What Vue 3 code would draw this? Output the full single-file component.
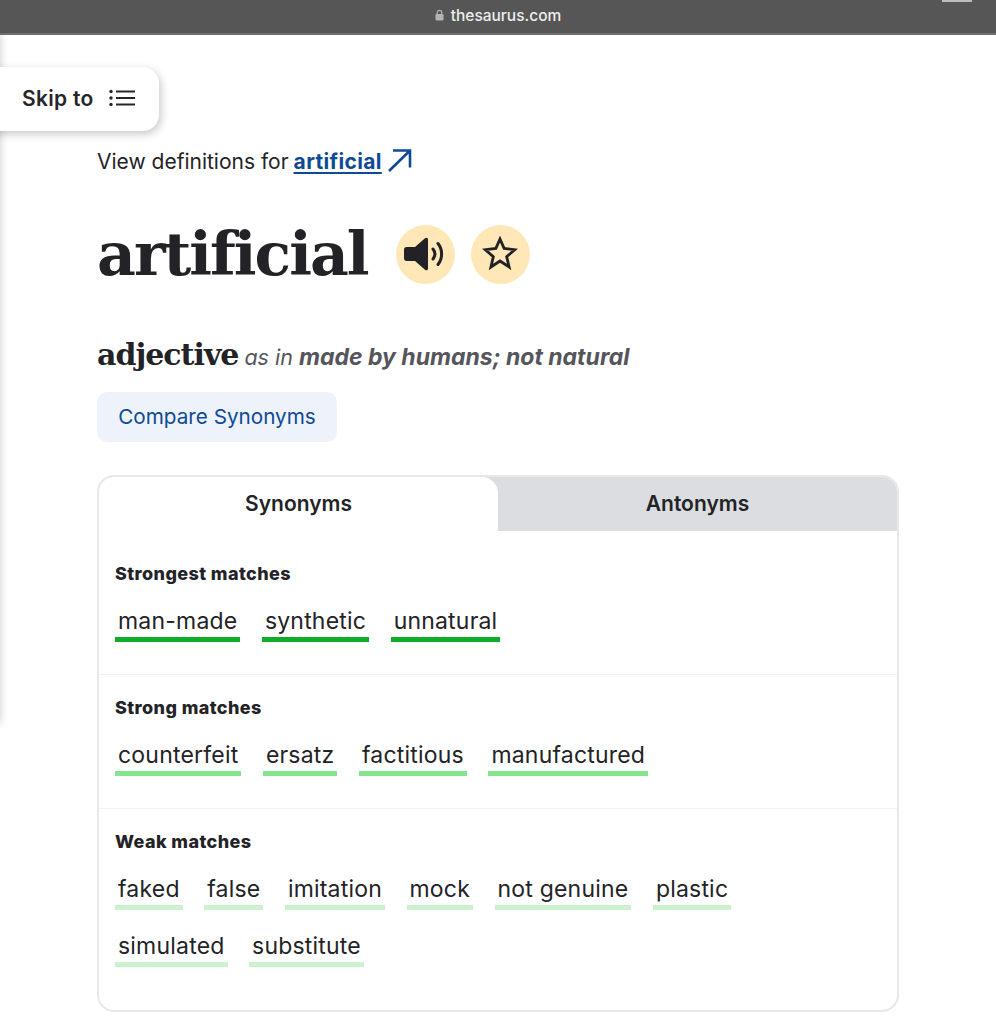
<template>
  <div class="page">
    <div class="edge-shadow"></div>
    <header class="browser-bar">
      <span class="bar-handle"></span>
      <svg class="lock" viewBox="0 0 10 13" width="9" height="12">
        <path d="M2.5 6V3.8a2.5 2.5 0 0 1 5 0V6" fill="none" stroke="#b4b4b8" stroke-width="1.3" />
        <rect x="0.5" y="5.5" width="9" height="7" rx="1.2" fill="#b4b4b8" />
      </svg>
      <span class="domain">thesaurus.com</span>
    </header>

    <button class="skip-to">
      <span>Skip to</span>
      <svg viewBox="0 0 26 18" width="26" height="18">
        <g fill="#26262a">
          <circle cx="2" cy="2.5" r="1.7" />
          <circle cx="2" cy="9" r="1.7" />
          <circle cx="2" cy="15.5" r="1.7" />
          <rect x="7" y="1.5" width="19" height="2" />
          <rect x="7" y="8" width="19" height="2" />
          <rect x="7" y="14.5" width="19" height="2" />
        </g>
      </svg>
    </button>

    <main class="content">
      <div class="view-defs">
        <span>View definitions for</span>
        <a class="def-link">artificial</a>
        <svg class="arrow" viewBox="0 0 26 24" width="26" height="24">
          <path d="M2 23L23 2.500M6 2.500h17v17" fill="none" stroke="#0f4a94" stroke-width="2.600" />
        </svg>
      </div>

      <div class="word-row">
        <h1>artificial</h1>
        <button class="round-btn">
          <svg viewBox="0 0 42 34" width="42" height="34">
            <path d="M0 12.500C0 11 1 10 2.500 10H11L21 1.200C22.500 0 24 .8 24 2.500v29c0 1.700-1.500 2.500-3 1.300L11 24H2.500C1 24 0 23 0 21.500z" fill="#222226" />
            <path d="M29 12c2.300 3 2.300 7 0 10M34 6.500c4.800 6 4.800 15 0 21" fill="none" stroke="#222226" stroke-width="3" stroke-linecap="round" />
          </svg>
        </button>
        <button class="round-btn">
          <svg viewBox="0 0 36 36" width="36" height="36">
            <path d="M18 3L22.110 12.340 32.740 13.710 24.660 20.660 27.110 31.040 18 25 8.890 31.040 11.340 20.660 3.260 13.710 13.890 12.340z" fill="none" stroke="#222226" stroke-width="2.800" />
          </svg>
        </button>
      </div>

      <h2 class="sense">
        <span class="pos">adjective</span>
        <span class="as-in">as in</span>
        <strong class="meaning">made by humans; not natural</strong>
      </h2>

      <button class="compare">Compare Synonyms</button>

      <section class="card">
        <div class="tabs">
          <div class="tab active">Synonyms</div>
          <div class="tab">Antonyms</div>
        </div>
        <div v-for="group in groups" :key="group.title" class="group">
          <h3>{{ group.title }}</h3>
          <ul>
            <li v-for="word in group.words" :key="word" :class="group.level">{{ word }}</li>
          </ul>
        </div>
      </section>
    </main>
  </div>
</template>

<script setup>
const groups = [
  { title: 'Strongest matches', level: 'strongest', words: ['man-made', 'synthetic', 'unnatural'] },
  { title: 'Strong matches', level: 'strong', words: ['counterfeit', 'ersatz', 'factitious', 'manufactured'] },
  {
    title: 'Weak matches',
    level: 'weak',
    words: ['faked', 'false', 'imitation', 'mock', 'not genuine', 'plastic', 'simulated', 'substitute']
  }
]
</script>

<style>
html, body {
  background: #fff;
}
</style>

<style scoped>
.page {
  position: relative;
  width: 996px;
  height: 1023px;
  overflow: hidden;
  background: #fff;
  color: #232327;
  font-family: Inter, "Liberation Sans", sans-serif;
}

.edge-shadow {
  position: absolute;
  left: -8px;
  top: 35px;
  width: 8px;
  height: 688px;
  box-shadow: 0 0 8px rgba(0, 0, 0, 0.22);
}

.browser-bar {
  position: relative;
  display: flex;
  align-items: center;
  justify-content: center;
  gap: 6px;
  height: 35px;
  padding-bottom: 3px;
  box-sizing: border-box;
  background: #565656;
  border-bottom: 2px solid #6e6e6e;
}

.bar-handle {
  position: absolute;
  right: 24px;
  top: 0;
  width: 30px;
  height: 2px;
  background: #bdbdbd;
}

.domain {
  margin-left: 1px;
  color: #eeeeee;
  font-size: 15.500px;
  font-weight: 500;
}

.skip-to {
  position: absolute;
  left: -16px;
  top: 67px;
  display: flex;
  align-items: center;
  gap: 15px;
  width: 175px;
  height: 64px;
  padding: 0 0 2px 38px;
  border: none;
  border-radius: 16px;
  background: #fff;
  box-shadow: 2px 3px 8px rgba(0, 0, 0, 0.22);
  color: #26262a;
  font-family: Inter, sans-serif;
  font-size: 21px;
  font-weight: 600;
  letter-spacing: 0.3px;
}

.content {
  padding: 0 97px;
}

.view-defs {
  display: flex;
  align-items: center;
  gap: 5px;
  margin-top: 112px;
  height: 28px;
  font-size: 21px;
}

.def-link {
  color: #0f4a94;
  font-weight: 700;
  letter-spacing: 0.35px;
  text-decoration: underline;
  text-underline-offset: 3px;
}

.arrow {
  margin-top: -2px;
}

.word-row {
  display: flex;
  align-items: center;
  margin-top: 49px;
  height: 60px;
}

h1 {
  margin: 0 28px 0 0;
  font-family: "DejaVu Serif", serif;
  font-size: 60px;
  font-weight: 700;
  line-height: 60px;
  letter-spacing: -2px;
}

.round-btn {
  display: flex;
  align-items: center;
  justify-content: center;
  width: 59px;
  height: 59px;
  margin-right: 16px;
  padding: 0;
  border: none;
  border-radius: 50%;
  background: #ffe7b8;
}

.sense {
  display: flex;
  align-items: baseline;
  gap: 6px;
  margin: 53px 0 0;
  height: 40px;
  font-weight: 400;
  white-space: pre;
}

.pos {
  font-family: "DejaVu Serif", serif;
  font-size: 30px;
  font-weight: 700;
  letter-spacing: -1px;
}

.as-in,
.meaning {
  color: #55555b;
  font-size: 23px;
  font-style: italic;
}

.as-in {
  font-size: 21.500px;
}

.meaning {
  font-weight: 700;
}

.compare {
  display: block;
  width: 240px;
  height: 50px;
  margin-top: 15px;
  padding: 0 0 2px;
  border: none;
  border-radius: 10px;
  background: #eef3fb;
  color: #0f4a94;
  font-family: Inter, sans-serif;
  font-size: 20.700px;
}

.card {
  width: 802px;
  height: 537px;
  margin-top: 33px;
  box-sizing: border-box;
  border: 2.500px solid #e8e8ea;
  border-radius: 17px;
  overflow: hidden;
}

.tabs {
  display: grid;
  grid-template-columns: 1fr 1fr;
  height: 54px;
  margin-bottom: 10px;
  background: #dcdde0;
}

.tab {
  display: flex;
  align-items: center;
  justify-content: center;
  padding-bottom: 2px;
  font-size: 21px;
  font-weight: 600;
}

.tab.active {
  background: #fff;
  border-top-right-radius: 16px;
}

.group {
  padding: 20px 16px 0;
  height: 134px;
  box-sizing: border-box;
  border-bottom: 1px solid #f3f3f4;
}

.group:last-child {
  border-bottom: none;
}

h3 {
  margin: 0;
  font-size: 18px;
  font-weight: 800;
  line-height: 26px;
  letter-spacing: 0.4px;
}

ul {
  display: flex;
  flex-wrap: wrap;
  gap: 20px 21.500px;
  max-width: 650px;
  margin: 18px 0 0;
  padding: 0;
  list-style: none;
}

li {
  height: 32px;
  padding: 0 3px;
  border-bottom: 5px solid;
  font-size: 23px;
  line-height: 32px;
  letter-spacing: 0.2px;
}

li.strongest {
  border-color: #0fac2a;
}

li.strong {
  border-color: #84e58f;
}

li.weak {
  border-color: #c9f2cd;
}
</style>
